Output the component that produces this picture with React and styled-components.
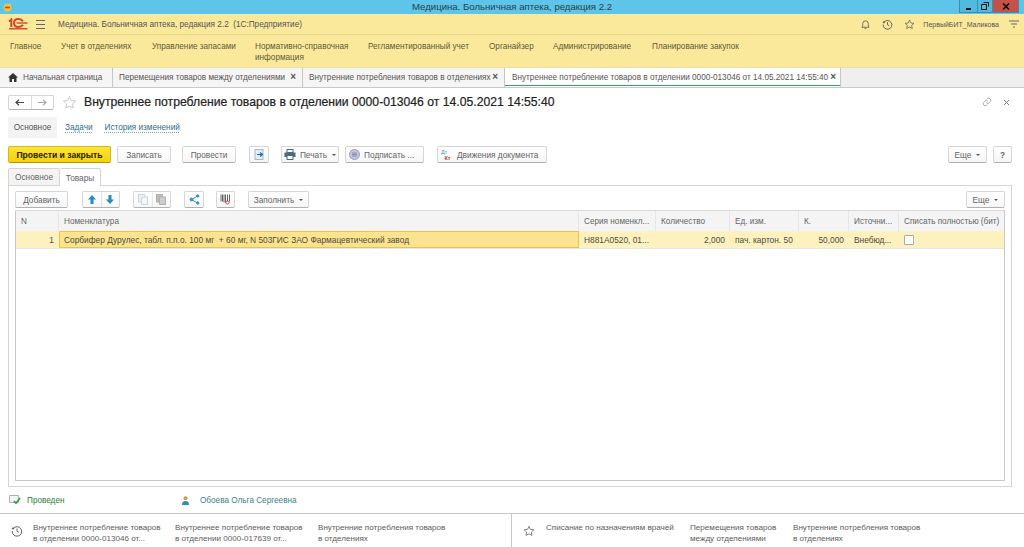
import React from 'react';
import styled, { createGlobalStyle } from 'styled-components';

const GlobalStyle = createGlobalStyle`
  html, body { margin: 0; padding: 0; height: 100%; background: #fff; }
  body { font-family: "Liberation Sans", Arial, sans-serif; font-size: 8.2px; color: #4a4a4a; overflow: hidden; }
`;

const Page = styled.div`
  width: 1024px;
  height: 547px;
  display: flex;
  flex-direction: column;
  overflow: hidden;
`;

const TitleBar = styled.div`
  height: 14px;
  flex: none;
  background: #5dc5e9;
  display: flex;
  align-items: center;
  justify-content: space-between;
  position: relative;
`;

const TitleText = styled.div`
  position: absolute;
  left: 412px;
  top: 0;
  line-height: 14px;
  font-size: 9.6px;
  color: #2c3e48;
`;

const AppIcon = styled.div`
  margin-left: 3px;
  display: flex;
`;

const WinButtons = styled.div`
  display: flex;
  height: 13px;
  align-self: flex-start;
  margin-right: 5px;
`;

const WinButton = styled.div`
  width: ${({ $w }) => $w}px;
  height: 13px;
  background: ${({ $close }) => ($close ? '#c4524a' : '#52bade')};
  border: 1px solid #3b8dab;
  border-top: none;
  border-left-width: ${({ $first }) => ($first ? 1 : 0)}px;
  box-sizing: border-box;
  display: flex;
  align-items: center;
  justify-content: center;
`;

const TopBar = styled.div`
  height: 21px;
  flex: none;
  background: #fbe99b;
  border-bottom: 1px solid #e6d68c;
  box-sizing: border-box;
  display: flex;
  align-items: center;
  padding: 0 5px 0 8px;
`;

const Logo = styled.div`
  width: 20px;
  display: flex;
  margin-right: 8px;
`;

const Burger = styled.div`
  width: 9px;
  height: 7px;
  border-top: 1px solid #666;
  border-bottom: 1px solid #666;
  position: relative;
  margin-right: 13px;
  &::after {
    content: '';
    position: absolute;
    left: 0;
    right: 0;
    top: 3px;
    height: 1px;
    background: #666;
  }
`;

const AppName = styled.div`
  color: #555;
  white-space: pre;
  flex: 1;
`;

const TopIcons = styled.div`
  display: flex;
  align-items: center;
  gap: 11px;
`;

const UserName = styled.div`
  font-size: 7px;
  color: #555;
  margin-left: -3px;
  margin-right: -1px;
`;

const Menu = styled.div`
  height: 33px;
  flex: none;
  background: #fbe99b;
  box-sizing: border-box;
  border-bottom: 1px solid #ede0a5;
  display: flex;
  padding: 5px 0 0 10px;
  color: #5f5a3a;
  line-height: 11px;
`;

const MenuItem = styled.div`
  width: ${({ $w }) => $w}px;
  flex: none;
  padding-top: 1px;
  white-space: pre;
`;

const Tabs = styled.div`
  height: 20px;
  flex: none;
  display: flex;
  background: #efefef;
  border-bottom: 1px solid #c9c9c9;
  box-sizing: border-box;
`;

const Tab = styled.div`
  width: ${({ $w }) => $w}px;
  flex: none;
  box-sizing: border-box;
  background: ${({ $active }) => ($active ? '#fff' : '#f5f5f5')};
  border-right: 1px solid #c6c6c6;
  display: flex;
  align-items: center;
  padding-left: ${({ $pad }) => $pad}px;
  color: #555;
  position: relative;
  white-space: nowrap;
  &::after {
    content: '';
    display: ${({ $active }) => ($active ? 'block' : 'none')};
    position: absolute;
    left: 0;
    right: 0;
    bottom: 1px;
    height: 1px;
    background: #3f9a6d;
  }
`;

const HomeGlyph = styled.svg`
  margin-right: 5px;
`;

const TabClose = styled.span`
  position: absolute;
  right: ${({ $r }) => $r}px;
  top: 2px;
  font-size: 10px;
  line-height: 14px;
  font-weight: bold;
  color: #555;
`;

const DocHeader = styled.div`
  height: 28px;
  flex: none;
  display: flex;
  align-items: center;
  padding: 0 14px 0 8px;
`;

const NavGroup = styled.div`
  width: 46px;
  height: 15px;
  display: flex;
  box-sizing: border-box;
  border: 1px solid #d4d4d4;
  border-bottom-color: #b5b5b5;
  border-radius: 2px;
  margin-right: 8px;
`;

const NavCell = styled.div`
  flex: 1;
  display: flex;
  align-items: center;
  justify-content: center;
  & + & { border-left: 1px solid #dcdcdc; }
`;

const DocTitle = styled.div`
  font-size: 12.2px;
  color: #222;
  font-weight: 500;
  margin-left: 7px;
  flex: 1;
  -webkit-text-stroke: 0.2px #222;
`;

const DocTools = styled.div`
  display: flex;
  align-items: center;
  gap: 11px;
`;

const SectionNav = styled.div`
  height: 22px;
  flex: none;
  display: flex;
  align-items: center;
  padding-left: 8px;
`;

const SectionCurrent = styled.div`
  width: 49px;
  height: 21px;
  background: #f3f3f3;
  display: flex;
  align-items: center;
  justify-content: center;
  color: #555;
  margin-right: 8px;
`;

const SectionLink = styled.div`
  color: #2d6f8f;
  text-decoration: underline dotted #7fa6ba;
  text-underline-offset: 2px;
  margin-right: ${({ $mr }) => $mr || 0}px;
`;

const CommandBar = styled.div`
  display: flex;
  align-items: center;
  height: 17px;
  margin: ${({ $m }) => $m};
  flex: none;
`;

const Btn = styled.div`
  width: ${({ $w }) => $w}px;
  height: 17px;
  box-sizing: border-box;
  flex: none;
  border: 1px solid #d6d6d6;
  border-bottom: 1px solid #b0b0b0;
  border-radius: 2px;
  background: ${({ $primary }) => ($primary ? 'linear-gradient(#fde53b, #f5cf10)' : 'linear-gradient(#fff, #f6f6f6)')};
  ${({ $primary }) => $primary && 'border-color: #dcb70f; border-bottom-color: #b8960c;'}
  color: ${({ $primary }) => ($primary ? '#2a2200' : '#666')};
  font-weight: ${({ $primary }) => ($primary ? 'bold' : 'normal')};
  font-size: ${({ $primary }) => ($primary ? 8.6 : 8.3)}px;
  display: flex;
  align-items: center;
  justify-content: ${({ $start }) => ($start ? 'flex-start' : 'center')};
  padding-left: ${({ $start }) => ($start ? 3 : 0)}px;
  gap: 4px;
  margin-left: ${({ $ml }) => $ml || 0}px;
  white-space: nowrap;
`;

const Split = styled.div`
  width: ${({ $w }) => $w}px;
  height: 17px;
  flex: none;
  box-sizing: border-box;
  display: flex;
  border: 1px solid #d6d6d6;
  border-bottom: 1px solid #b0b0b0;
  border-radius: 2px;
  background: linear-gradient(#fff, #f6f6f6);
  margin-left: ${({ $ml }) => $ml || 0}px;
`;

const SplitCell = styled.div`
  flex: 1;
  display: flex;
  align-items: center;
  justify-content: center;
  opacity: ${({ $dim }) => ($dim ? 0.65 : 1)};
  & + & { border-left: 1px solid #e2e2e2; }
`;

const Arrow = styled.span`
  width: 0;
  height: 0;
  border-left: 2px solid transparent;
  border-right: 2px solid transparent;
  border-top: 2px solid #555;
  margin-left: 1px;
`;

const Spacer = styled.div`
  flex: 1;
`;

const PageTabs = styled.div`
  height: 18px;
  flex: none;
  margin: 5px 0 0 8px;
  display: flex;
  position: relative;
  z-index: 1;
`;

const PageTab = styled.div`
  width: ${({ $w }) => $w}px;
  height: ${({ $active }) => ($active ? 18 : 17)}px;
  box-sizing: border-box;
  background: ${({ $active }) => ($active ? '#fff' : '#f3f3f3')};
  border: 1px solid #d4d4d4;
  border-bottom: none;
  border-left-width: ${({ $active }) => ($active ? 0 : 1)}px;
  border-radius: 2px 2px 0 0;
  display: flex;
  align-items: center;
  justify-content: center;
  font-size: 8.3px;
  color: #666;
`;

const Panel = styled.div`
  height: 302px;
  flex: none;
  margin: -1px 12px 0 8px;
  border: 1px solid #d4d4d4;
  box-sizing: border-box;
  padding: 5px 6px;
  display: flex;
  flex-direction: column;
`;

const Table = styled.div`
  flex: 1;
  margin-top: 2px;
  border: 1px solid #c8c8c8;
  border-top: 1px solid #d8d8d8;
  display: flex;
  flex-direction: column;
  min-height: 0;
`;

const Columns = '43px 520px 77px 74px 69px 50px 50px 1fr';

const HeaderRow = styled.div`
  display: grid;
  grid-template-columns: ${Columns};
  height: 20px;
  background: #f4f4f4;
  flex: none;
`;

const HeaderCell = styled.div`
  display: flex;
  align-items: center;
  padding-left: 5px;
  font-size: 8.2px;
  color: #666;
  border-right: 1px solid #e6e6e6;
  white-space: nowrap;
  overflow: hidden;
  &:last-child { border-right: none; }
`;

const DataRow = styled.div`
  display: grid;
  grid-template-columns: ${Columns};
  height: 18px;
  background: #fdf1c0;
  border-bottom: 1px solid #e6e6e6;
  box-sizing: border-box;
  flex: none;
`;

const DataCell = styled.div`
  display: flex;
  align-items: center;
  justify-content: ${({ $right }) => ($right ? 'flex-end' : 'flex-start')};
  padding: ${({ $right }) => ($right ? '0 5px 0 0' : '0 0 0 5px')};
  font-size: 8.35px;
  color: #4d4b3e;
  white-space: pre;
  overflow: hidden;
  box-sizing: border-box;
  ${({ $focus }) => $focus && 'background: #fbe38f; border: 1px solid #e9c744; padding-left: 4px;'}
`;

const CheckBox = styled.div`
  width: 8px;
  height: 8px;
  background: #fff;
  border: 1px solid #a9a9a9;
  border-radius: 1px;
`;

const StatusRow = styled.div`
  height: 26px;
  flex: none;
  box-sizing: border-box;
  display: flex;
  align-items: center;
  padding-left: 9px;
`;

const StatusPosted = styled.div`
  color: #2f7d34;
  margin-left: 6px;
  width: 155px;
`;

const Author = styled.div`
  color: #3c7f8c;
  margin-left: 11px;
`;

const Bottom = styled.div`
  flex: 1;
  display: flex;
  border-top: 1px solid #c8c8c8;
  min-height: 0;
`;

const BottomPane = styled.div`
  width: ${({ $w }) => $w}px;
  flex: none;
  box-sizing: border-box;
  display: flex;
  padding-top: 8px;
  border-right: ${({ $divider }) => ($divider ? '1px solid #c8c8c8' : 'none')};
`;

const PaneIcon = styled.div`
  width: ${({ $w }) => $w}px;
  flex: none;
  display: flex;
  justify-content: center;
  padding-top: 3px;
  box-sizing: border-box;
  height: 20px;
`;

const BottomLink = styled.div`
  width: ${({ $w }) => $w}px;
  flex: none;
  font-size: 8.1px;
  line-height: 11px;
  color: #5c5c5c;
  white-space: pre;
`;

const Star = ({ size = 14, color = '#c9c9c9' }) => (
  <svg width={size} height={size} viewBox="0 0 24 24" fill="none" stroke={color} strokeWidth="1.6" strokeLinejoin="round">
    <path d="M12 2.5l2.9 6.2 6.8.8-5 4.6 1.3 6.7-6-3.3-6 3.3 1.3-6.7-5-4.6 6.8-.8z" />
  </svg>
);

const HistoryIcon = ({ size = 12, color = '#666' }) => (
  <svg width={size} height={size} viewBox="0 0 24 24" fill="none" stroke={color} strokeWidth="2">
    <path d="M4.5 7A9.5 9.5 0 1 1 2.5 12" />
    <path d="M1.5 7h5M4 4.5v5" strokeWidth="1.8" />
    <path d="M12 7v5.5l3.5 2" />
  </svg>
);

const ArrowIcon = ({ dir, color }) => (
  <svg width="9" height="7" viewBox="0 0 9 7" fill="none" stroke={color} strokeWidth="1.2">
    {dir === 'left' ? <path d="M9 3.5H1M4 .8L1 3.5 4 6.2" /> : <path d="M0 3.5h8M5 .8l3 2.7L5 6.2" />}
  </svg>
);

const BlockArrow = ({ up }) => (
  <svg width="8" height="9" viewBox="0 0 8 9" fill="#2a8ac4">
    {up ? <path d="M4 0l4 4.500H5.500V9h-3V4.500H0z" /> : <path d="M4 9L0 4.500h2.500V0h3v4.500H8z" />}
  </svg>
);

const CopyIcon = ({ dark }) => (
  <svg width="10" height="11" viewBox="0 0 10 11">
    <rect x="0.5" y="0.5" width="6" height="7.5" fill={dark ? '#9a9a9a' : '#e8eef2'} stroke={dark ? '#8a8a8a' : '#a9c3d2'} />
    <rect x="3.5" y="3" width="6" height="7.5" fill={dark ? '#b5b5b5' : '#f3f3f3'} stroke={dark ? '#8a8a8a' : '#b4c7d3'} />
  </svg>
);

const ShareIcon = () => (
  <svg width="11" height="11" viewBox="0 0 11 11" fill="#2f95c5" stroke="#2f95c5">
    <path d="M8.500 2L2.500 5.500l6 3.500" fill="none" strokeWidth="1" />
    <circle cx="8.700" cy="2" r="1.200" />
    <circle cx="2.500" cy="5.500" r="1.400" />
    <circle cx="8.700" cy="9" r="1.200" />
  </svg>
);

const BarcodeIcon = () => (
  <svg width="11" height="11" viewBox="0 0 11 11" stroke="#666" fill="none">
    <path d="M1 .5v7M2.500 .5v7M4 .5v8M5.500 .5v8M7.500 .5v7M9.500 .5v7" />
    <circle cx="7.500" cy="8.500" r="1.600" stroke="#c0504d" />
  </svg>
);

const PrinterIcon = () => (
  <svg width="12" height="11" viewBox="0 0 12 11">
    <rect x="3" y="0.5" width="6" height="3" fill="#fff" stroke="#4b6a80" />
    <rect x="0.5" y="3.5" width="11" height="4.5" fill="#4b6a80" />
    <rect x="3" y="6.5" width="6" height="4" fill="#fff" stroke="#4b6a80" />
  </svg>
);

const SignIcon = () => (
  <svg width="11" height="11" viewBox="0 0 11 11">
    <circle cx="5.500" cy="5.500" r="5" fill="#c4c6de" stroke="#9a9cc0" />
    <path d="M3 4h5M3 5.500h5M3 7h5" stroke="#7b7da5" strokeWidth="0.8" />
  </svg>
);

const MovesIcon = () => (
  <svg width="12" height="12" viewBox="0 0 12 12" fontFamily="Liberation Sans, sans-serif" fontSize="5.500">
    <text x="0" y="5" fill="#4a8fb5">Дт</text>
    <text x="3.500" y="11" fill="#c0392b" fontWeight="bold">Кт</text>
  </svg>
);

const SendIcon = () => (
  <svg width="11" height="11" viewBox="0 0 11 11">
    <rect x="1" y="0.5" width="8" height="10" fill="#e4edf3" stroke="#a5bac8" />
    <path d="M3 5.500h4.500M6 3.500l2.500 2-2.500 2" fill="none" stroke="#1d6fa5" strokeWidth="1.200" />
  </svg>
);

const PostedIcon = () => (
  <svg width="12" height="10" viewBox="0 0 12 10" fill="none">
    <path d="M.5 .5h9v7h-9z" stroke="#a8b3b8" fill="#f2f5f6" />
    <path d="M5 6l2 2.300L11 3" stroke="#2f9e3b" strokeWidth="1.600" />
  </svg>
);

const PersonIcon = () => (
  <svg width="7" height="9" viewBox="0 0 7 9">
    <circle cx="3.500" cy="2.200" r="2" fill="#c89a5e" />
    <path d="M0 9c0-3 1.200-4 3.500-4S7 6 7 9z" fill="#2e8fa8" />
  </svg>
);

const LogoIcon = () => (
  <svg width="20" height="12" viewBox="0 0 20 12" fill="none" stroke="#d2442c">
    <path d="M1 3.500L3.300 1.500V9" strokeWidth="2" />
    <path d="M15 3.200C14 1.700 12.500 1 10.500 1 7.800 1 6 2.600 6 5s1.800 4 4.500 4c2 0 3.500-.7 4.500-2.200" strokeWidth="2" />
    <path d="M8.500 5H19.500" strokeWidth="1.400" />
    <path d="M1 10.800H19.500" strokeWidth="1.400" />
  </svg>
);

const columns = ['N', 'Номенклатура', 'Серия номенкл...', 'Количество', 'Ед. изм.', 'К.', 'Источни...', 'Списать полностью (бит)'];
const menu = [
  ['Главное', 51],
  ['Учет в отделениях', 91],
  ['Управление запасами', 103],
  ['Нормативно-справочная\nинформация', 113],
  ['Регламентированный учет', 121],
  ['Органайзер', 64],
  ['Администрирование', 99],
  ['Планирование закупок', 120],
];

const App = () => (
  <Page>
    <GlobalStyle />
    <TitleBar>
      <AppIcon>
        <svg width="9" height="9" viewBox="0 0 9 9">
          <circle cx="4.500" cy="4.500" r="4" fill="#f3c23c" />
          <path d="M2 4.500h5" stroke="#d2442c" strokeWidth="1.600" />
        </svg>
      </AppIcon>
      <TitleText>Медицина. Больничная аптека, редакция 2.2</TitleText>
      <WinButtons>
        <WinButton $w={19} $first>
          <svg width="7" height="7" viewBox="0 0 7 7"><path d="M1 6h5" stroke="#111" strokeWidth="2" /></svg>
        </WinButton>
        <WinButton $w={15}>
          <svg width="8" height="8" viewBox="0 0 8 8" fill="none" stroke="#111"><path d="M2.500 .5h5v4M.5 2.500h5v5h-5z" /></svg>
        </WinButton>
        <WinButton $w={26} $close>
          <svg width="8" height="7" viewBox="0 0 8 7" stroke="#111" strokeWidth="1.600"><path d="M1 .5l6 6M7 .5l-6 6" /></svg>
        </WinButton>
      </WinButtons>
    </TitleBar>

    <TopBar>
      <Logo><LogoIcon /></Logo>
      <Burger />
      <AppName>Медицина. Больничная аптека, редакция 2.2  (1С:Предприятие)</AppName>
      <TopIcons>
        <svg width="11" height="11" viewBox="0 0 24 24" fill="none" stroke="#555" strokeWidth="1.800"><path d="M4 18c2-2 2-4 2-8a6 6 0 0 1 12 0c0 4 0 6 2 8zM10 21h4" /></svg>
        <HistoryIcon size={11} color="#555" />
        <Star size={11} color="#555" />
        <UserName>ПервыйБИТ_Маликова</UserName>
        <svg width="10" height="8" viewBox="0 0 10 8" stroke="#666" fill="none"><path d="M0 1h10M2 4h6M4 7h2" /></svg>
      </TopIcons>
    </TopBar>

    <Menu>
      {menu.map(([label, w]) => (
        <MenuItem key={label} $w={w}>{label}</MenuItem>
      ))}
    </Menu>

    <Tabs>
      <Tab $w={113} $pad={8}>
        <HomeGlyph width="10" height="9" viewBox="0 0 10 9"><path d="M5 0L0 4.500h1.500V9h2.500V6h2v3h2.500V4.500H10z" fill="#333" /></HomeGlyph>
        Начальная страница
      </Tab>
      <Tab $w={190} $pad={6}>Перемещения товаров между отделениями<TabClose $r={6}>×</TabClose></Tab>
      <Tab $w={202} $pad={6}>Внутренние потребления товаров в отделениях<TabClose $r={6}>×</TabClose></Tab>
      <Tab $w={336} $pad={7} $active>Внутреннее потребление товаров в отделении 0000-013046 от 14.05.2021 14:55:40<TabClose $r={4}>×</TabClose></Tab>
    </Tabs>

    <DocHeader>
      <NavGroup>
        <NavCell><ArrowIcon dir="left" color="#444" /></NavCell>
        <NavCell><ArrowIcon dir="right" color="#aaa" /></NavCell>
      </NavGroup>
      <Star size={15} />
      <DocTitle>Внутреннее потребление товаров в отделении 0000-013046 от 14.05.2021 14:55:40</DocTitle>
      <DocTools>
        <svg width="10" height="10" viewBox="0 0 24 24" fill="none" stroke="#9a9a9a" strokeWidth="2">
          <path d="M10 14a5 5 0 0 0 7 0l3-3a5 5 0 0 0-7-7l-1.500 1.500M14 10a5 5 0 0 0-7 0l-3 3a5 5 0 0 0 7 7l1.500-1.500" />
        </svg>
        <svg width="7" height="7" viewBox="0 0 7 7" stroke="#777" strokeWidth="1"><path d="M1 1l5 5M6 1l-5 5" /></svg>
      </DocTools>
    </DocHeader>

    <SectionNav>
      <SectionCurrent>Основное</SectionCurrent>
      <SectionLink $mr={12}>Задачи</SectionLink>
      <SectionLink>История изменений</SectionLink>
    </SectionNav>

    <CommandBar $m="8px 12px 0 8px">
      <Btn $w={103} $primary>Провести и закрыть</Btn>
      <Btn $w={54} $ml={6}>Записать</Btn>
      <Btn $w={54} $ml={11}>Провести</Btn>
      <Btn $w={20} $ml={13}><SendIcon /></Btn>
      <Btn $w={58} $ml={12}><PrinterIcon />Печать<Arrow /></Btn>
      <Btn $w={79} $ml={6} $start><SignIcon />Подписать ...</Btn>
      <Btn $w={110} $ml={13} $start><MovesIcon />Движения документа</Btn>
      <Spacer />
      <Btn $w={39}>Еще<Arrow /></Btn>
      <Btn $w={19} $ml={6}><b>?</b></Btn>
    </CommandBar>

    <PageTabs>
      <PageTab $w={52}>Основное</PageTab>
      <PageTab $w={41} $active>Товары</PageTab>
    </PageTabs>

    <Panel>
      <CommandBar $m="0">
        <Btn $w={53}>Добавить</Btn>
        <Split $w={38} $ml={14}>
          <SplitCell><BlockArrow up /></SplitCell>
          <SplitCell><BlockArrow /></SplitCell>
        </Split>
        <Split $w={38} $ml={13}>
          <SplitCell $dim><CopyIcon /></SplitCell>
          <SplitCell $dim><CopyIcon dark /></SplitCell>
        </Split>
        <Btn $w={20} $ml={13}><ShareIcon /></Btn>
        <Btn $w={19} $ml={12}><BarcodeIcon /></Btn>
        <Btn $w={61} $ml={13}>Заполнить<Arrow /></Btn>
        <Spacer />
        <Btn $w={39}>Еще<Arrow /></Btn>
      </CommandBar>
      <Table>
        <HeaderRow>
          {columns.map((c) => <HeaderCell key={c}>{c}</HeaderCell>)}
        </HeaderRow>
        <DataRow>
          <DataCell $right>1</DataCell>
          <DataCell $focus>Сорбифер Дурулес, табл. п.п.о. 100 мг  + 60 мг, N 503ГИС ЗАО Фармацевтический завод</DataCell>
          <DataCell>Н881А0520, 01...</DataCell>
          <DataCell $right>2,000</DataCell>
          <DataCell>пач. картон. 50</DataCell>
          <DataCell $right>50,000</DataCell>
          <DataCell>Внебюд...</DataCell>
          <DataCell><CheckBox /></DataCell>
        </DataRow>
      </Table>
    </Panel>

    <StatusRow>
      <PostedIcon />
      <StatusPosted>Проведен</StatusPosted>
      <PersonIcon />
      <Author>Обоева Ольга Сергеевна</Author>
    </StatusRow>

    <Bottom>
      <BottomPane $w={512} $divider>
        <PaneIcon $w={33}><HistoryIcon size={12} /></PaneIcon>
        <BottomLink $w={142}>{'Внутреннее потребление товаров\nв отделении 0000-013046 от...'}</BottomLink>
        <BottomLink $w={143}>{'Внутреннее потребление товаров\nв отделении 0000-017639 от...'}</BottomLink>
        <BottomLink $w={150}>{'Внутренние потребления товаров\nв отделениях'}</BottomLink>
      </BottomPane>
      <BottomPane $w={512}>
        <PaneIcon $w={34}><Star size={12} color="#666" /></PaneIcon>
        <BottomLink $w={144}>Списание по назначениям врачей</BottomLink>
        <BottomLink $w={103}>{'Перемещения товаров\nмежду отделениями'}</BottomLink>
        <BottomLink $w={150}>{'Внутренние потребления товаров\nв отделениях'}</BottomLink>
      </BottomPane>
    </Bottom>
  </Page>
);

export default App;
